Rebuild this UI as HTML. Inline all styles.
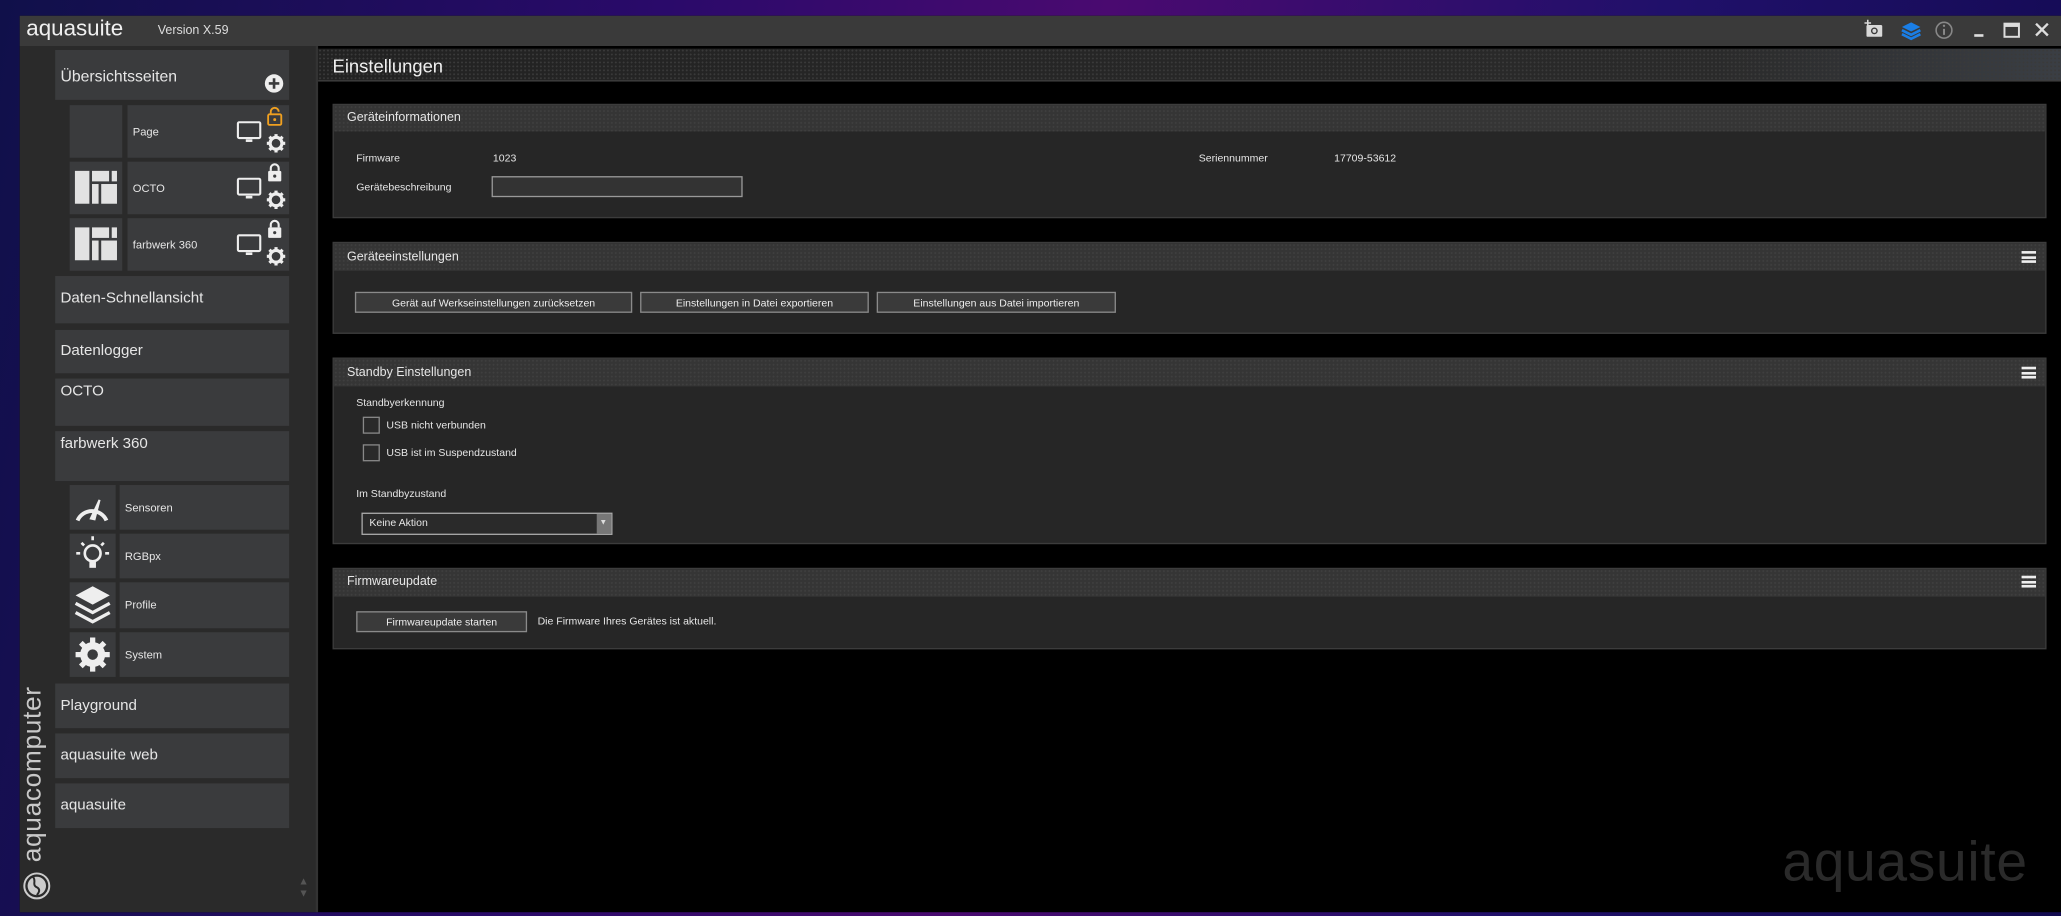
<!DOCTYPE html>
<html><head><meta charset="utf-8"><style>
html,body{margin:0;padding:0;width:2061px;height:916px;overflow:hidden;background:#1a0a4a;}
#s{position:absolute;left:0;top:0;width:1568px;height:697px;transform:scale(1.31441);transform-origin:0 0;font-family:"Liberation Sans",sans-serif;color:#e6e6e6;
background:linear-gradient(100deg,#10104a 0%,#2a0a6a 30%,#4a0a70 50%,#20106a 75%,#120a50 100%);}
.a{position:absolute;box-sizing:border-box;}
.it{background:#3a3b3d;}
.t{position:absolute;white-space:nowrap;}
.ph{background:#353535;background-image:radial-gradient(#3f3f3f 0.6px,transparent 0.8px);background-size:3px 3px;}
.pb{background:#262626;border:1px solid #3c3c3c;}
.btn{position:absolute;height:16px;border:1px solid #8a8a8a;background:#3a3a3a;font-size:8px;text-align:center;line-height:15px;box-sizing:border-box;color:#eee;}
.hm{position:absolute;width:11px;height:9px;border-top:2px solid #eee;border-bottom:2px solid #eee;box-sizing:border-box;}
.hm:after{content:"";position:absolute;left:0;right:0;top:1.5px;height:2px;background:#eee;}
.cb{position:absolute;width:13px;height:13px;border:1px solid #888;background:#2a2a2a;box-sizing:border-box;}
</style></head><body><div id="s">
<div class="a" style="left:15px;top:12px;width:1553px;height:682px;background:#000;"></div>
<div class="a" style="left:15px;top:12px;width:1553px;height:23px;background:#3a3a3a;"></div>
<div class="t" style="left:20px;top:12px;font-size:17px;color:#f0f0f0;">aquasuite</div>
<div class="t" style="left:120px;top:18px;font-size:9.5px;color:#ddd;">Version X.59</div>
<svg class="a" style="left:1418px;top:14px" width="150" height="18" viewBox="0 0 150 18">
<rect x="2" y="5" width="12" height="9" rx="1" fill="#d8d8d8"/><circle cx="8" cy="9.5" r="2.6" fill="#3a3a3a"/><circle cx="8" cy="9.5" r="1.5" fill="#d8d8d8"/><path d="M3 1v5M0.5 3.5h5" stroke="#d8d8d8" stroke-width="1.2"/>
<path d="M36 3l7 3.5-7 3.5-7-3.5z" fill="#1a7ee6"/><path d="M29 9l7 3.5 7-3.5M29 12l7 3.5 7-3.5" stroke="#1a7ee6" stroke-width="2" fill="none"/>
<circle cx="61" cy="9" r="6" stroke="#888" stroke-width="1.2" fill="none"/><path d="M61 8v4.5" stroke="#888" stroke-width="1.5"/><circle cx="61" cy="5.6" r="0.9" fill="#888"/>
<rect x="84" y="12" width="7" height="2" fill="#ddd"/>
<rect x="107" y="4" width="11" height="10" stroke="#ddd" stroke-width="1.5" fill="none"/><rect x="107" y="4" width="11" height="2.5" fill="#ddd"/>
<path d="M131 4l9 9M140 4l-9 9" stroke="#ddd" stroke-width="1.8"/>
</svg>
<div class="a" style="left:15px;top:35px;width:225px;height:659px;background:#2a2a2a;"></div>
<div class="a" style="left:240px;top:35px;width:2px;height:659px;background:#333;"></div>
<div class="t" style="left:14px;top:656px;font-size:20px;color:#c8c8c8;transform:rotate(-90deg);transform-origin:0 0;letter-spacing:0.5px;">aquacomputer</div>
<svg class="a" style="left:17px;top:663px" width="22" height="22" viewBox="0 0 22 22"><circle cx="11" cy="11" r="9.5" fill="none" stroke="#ccc" stroke-width="1.5"/><circle cx="11" cy="11" r="7" fill="#ccc"/><path d="M8 4c3 3-1 6 3 8s0 6 0 6" stroke="#2a2a2a" stroke-width="1.5" fill="none"/></svg>
<div class="t" style="left:227px;top:666px;font-size:8px;color:#555;line-height:9px;">▲<br>▼</div>

<div class="a it" style="left:42px;top:38px;width:178px;height:38px;"></div>
<div class="t" style="left:46px;top:51px;font-size:12px;">Übersichtsseiten</div>
<svg class="a" style="left:201px;top:56px" width="15" height="15" viewBox="0 0 15 15"><circle cx="7.5" cy="7.5" r="7" fill="#eee"/><path d="M7.5 3.5v8M3.5 7.5h8" stroke="#3a3b3d" stroke-width="2"/></svg>

<div class="a it" style="left:53px;top:80px;width:40px;height:40px;"></div>
<div class="a it" style="left:97px;top:80px;width:123px;height:40px;"></div>
<div class="t" style="left:101px;top:95px;font-size:8.5px;">Page</div>
<div class="a it" style="left:53px;top:123px;width:40px;height:40px;"></div>
<div class="a it" style="left:97px;top:123px;width:123px;height:40px;"></div>
<div class="t" style="left:101px;top:138px;font-size:8.5px;">OCTO</div>
<div class="a it" style="left:53px;top:166px;width:40px;height:40px;"></div>
<div class="a it" style="left:97px;top:166px;width:123px;height:40px;"></div>
<div class="t" style="left:101px;top:181px;font-size:8.5px;">farbwerk 360</div>
<svg class="a" style="left:53px;top:80px" width="167" height="126" viewBox="0 0 167 126">
<defs><g id="mon"><rect x="0" y="0" width="17" height="12" rx="1" fill="none" stroke="#eee" stroke-width="1.6"/><path d="M6 14h5" stroke="#eee" stroke-width="2"/></g>
<g id="gear"><circle cx="7" cy="7" r="4.5" fill="none" stroke="#eee" stroke-width="2.4"/><path d="M7 0v3M7 11v3M0 7h3M11 7h3M2 2l2 2M10 10l2 2M12 2l-2 2M4 10l-2 2" stroke="#eee" stroke-width="2.4"/></g>
<g id="lock"><rect x="0" y="5" width="10" height="8" rx="1" fill="#eee"/><path d="M2 5V3a3 3 0 0 1 6 0v2" stroke="#eee" stroke-width="1.6" fill="none"/><circle cx="5" cy="9" r="1.2" fill="#3a3b3d"/></g>
<g id="tiles"><rect x="0" y="0" width="11" height="25" fill="#e2e2e2"/><rect x="13" y="0" width="13" height="8" fill="#e2e2e2"/><rect x="13" y="10" width="5" height="15" fill="#e2e2e2"/><rect x="20" y="10" width="12" height="15" fill="#e2e2e2"/><rect x="28" y="0" width="4" height="8" fill="#e2e2e2"/></g></defs>
<use href="#mon" x="128" y="13"/><use href="#gear" x="150" y="22"/>
<g transform="translate(151,2)"><rect x="0" y="5" width="10" height="8" rx="1" fill="none" stroke="#f0a020" stroke-width="1.4"/><path d="M2 5V3a3 3 0 0 1 6 0" stroke="#f0a020" stroke-width="1.4" fill="none"/><circle cx="5" cy="9" r="1.1" fill="#f0a020"/></g>
<use href="#tiles" x="4" y="50"/><use href="#mon" x="128" y="56"/><use href="#gear" x="150" y="65"/><use href="#lock" x="151" y="45"/>
<use href="#tiles" x="4" y="93"/><use href="#mon" x="128" y="99"/><use href="#gear" x="150" y="108"/><use href="#lock" x="151" y="88"/>
</svg>

<div class="a it" style="left:42px;top:210px;width:178px;height:36px;"></div>
<div class="t" style="left:46px;top:221px;font-size:11.5px;">Daten-Schnellansicht</div>
<div class="a it" style="left:42px;top:251px;width:178px;height:33px;"></div>
<div class="t" style="left:46px;top:261px;font-size:11.5px;">Datenlogger</div>
<div class="a it" style="left:42px;top:288px;width:178px;height:36px;"></div>
<div class="t" style="left:46px;top:292px;font-size:11.5px;">OCTO</div>
<div class="a it" style="left:42px;top:328px;width:178px;height:38px;"></div>
<div class="t" style="left:46px;top:332px;font-size:11.5px;">farbwerk 360</div>

<div class="a it" style="left:53px;top:369px;width:35px;height:34px;"></div><div class="a it" style="left:91px;top:369px;width:129px;height:34px;"></div>
<div class="t" style="left:95px;top:381px;font-size:8.5px;">Sensoren</div>
<div class="a it" style="left:53px;top:406px;width:35px;height:34px;"></div><div class="a it" style="left:91px;top:406px;width:129px;height:34px;"></div>
<div class="t" style="left:95px;top:418px;font-size:8.5px;">RGBpx</div>
<div class="a it" style="left:53px;top:443px;width:35px;height:35px;"></div><div class="a it" style="left:91px;top:443px;width:129px;height:35px;"></div>
<div class="t" style="left:95px;top:455px;font-size:8.5px;">Profile</div>
<div class="a it" style="left:53px;top:481px;width:35px;height:34px;"></div><div class="a it" style="left:91px;top:481px;width:129px;height:34px;"></div>
<div class="t" style="left:95px;top:493px;font-size:8.5px;">System</div>
<svg class="a" style="left:53px;top:369px" width="35" height="146" viewBox="0 0 35 146">
<path d="M6 27a12 12 0 0 1 22 0" stroke="#eee" stroke-width="3" fill="none"/><path d="M15 26l7-15 1.5 0.5-4 15.5z" fill="#eee"/>
<g transform="translate(0,37)"><circle cx="17.5" cy="15" r="6" fill="none" stroke="#eee" stroke-width="2"/><rect x="15" y="21" width="5" height="5" fill="#eee"/><path d="M17.5 2v3M5 15h3M27 15h3M9 7l2 2M26 7l-2 2" stroke="#eee" stroke-width="2"/></g>
<g transform="translate(0,74)"><path d="M17.5 3l13 7-13 7-13-7z" fill="#eee"/><path d="M4.5 16l13 7 13-7M4.5 23l13 7 13-7" stroke="#eee" stroke-width="2.5" fill="none"/></g>
<g transform="translate(17.5,129)"><circle r="7" fill="none" stroke="#eee" stroke-width="5"/><path d="M0-13v26M-13 0h26M-9-9l18 18M9-9l-18 18" stroke="#eee" stroke-width="4"/><circle r="4" fill="#3a3b3d"/></g>
</svg>

<div class="a it" style="left:42px;top:520px;width:178px;height:34px;"></div>
<div class="t" style="left:46px;top:531px;font-size:11.5px;">Playground</div>
<div class="a it" style="left:42px;top:558px;width:178px;height:34px;"></div>
<div class="t" style="left:46px;top:569px;font-size:11.5px;">aquasuite web</div>
<div class="a it" style="left:42px;top:596px;width:178px;height:34px;"></div>
<div class="t" style="left:46px;top:607px;font-size:11.5px;">aquasuite</div>

<div class="a" style="left:242px;top:37px;width:1326px;height:25px;background-image:radial-gradient(#3a3a3a 0.6px,transparent 0.8px),linear-gradient(90deg,#222 0%,#2a2a2a 80%,#3a3e44 100%);background-size:3px 3px,100% 100%;border-bottom:1px solid #444;"></div>
<div class="t" style="left:253px;top:42px;font-size:14px;color:#f0f0f0;">Einstellungen</div>

<div class="a pb" style="left:253px;top:79px;width:1304px;height:87px;"></div>
<div class="a ph" style="left:254px;top:80px;width:1302px;height:20px;"></div>
<div class="t" style="left:264px;top:84px;font-size:9.5px;">Geräteinformationen</div>
<div class="t" style="left:271px;top:116px;font-size:8px;">Firmware</div>
<div class="t" style="left:375px;top:116px;font-size:8px;">1023</div>
<div class="t" style="left:912px;top:116px;font-size:8px;">Seriennummer</div>
<div class="t" style="left:1015px;top:116px;font-size:8px;">17709-53612</div>
<div class="t" style="left:271px;top:138px;font-size:8px;">Gerätebeschreibung</div>
<div class="a" style="left:374px;top:134px;width:191px;height:16px;border:1px solid #999;background:#333;"></div>

<div class="a pb" style="left:253px;top:184px;width:1304px;height:70px;"></div>
<div class="a ph" style="left:254px;top:185px;width:1302px;height:21px;"></div>
<div class="t" style="left:264px;top:190px;font-size:9.5px;">Geräteeinstellungen</div>
<div class="hm" style="left:1538px;top:191px;"></div>
<div class="btn" style="left:270px;top:222px;width:211px;">Gerät auf Werkseinstellungen zurücksetzen</div>
<div class="btn" style="left:487px;top:222px;width:174px;">Einstellungen in Datei exportieren</div>
<div class="btn" style="left:667px;top:222px;width:182px;">Einstellungen aus Datei importieren</div>

<div class="a pb" style="left:253px;top:272px;width:1304px;height:142px;"></div>
<div class="a ph" style="left:254px;top:273px;width:1302px;height:21px;"></div>
<div class="t" style="left:264px;top:278px;font-size:9.5px;">Standby Einstellungen</div>
<div class="hm" style="left:1538px;top:279px;"></div>
<div class="t" style="left:271px;top:302px;font-size:8px;">Standbyerkennung</div>
<div class="cb" style="left:276px;top:317px;"></div>
<div class="t" style="left:294px;top:319px;font-size:8px;">USB nicht verbunden</div>
<div class="cb" style="left:276px;top:338px;"></div>
<div class="t" style="left:294px;top:340px;font-size:8px;">USB ist im Suspendzustand</div>
<div class="t" style="left:271px;top:371px;font-size:8px;">Im Standbyzustand</div>
<div class="a" style="left:275px;top:390px;width:191px;height:17px;border:1px solid #aaa;background:#2a2a2a;"></div>
<div class="a" style="left:454px;top:391px;width:11px;height:15px;background:#777;"></div>
<div class="t" style="left:456px;top:395px;font-size:6px;color:#ddd;">▼</div>
<div class="t" style="left:281px;top:393px;font-size:8px;">Keine Aktion</div>

<div class="a pb" style="left:253px;top:432px;width:1304px;height:62px;"></div>
<div class="a ph" style="left:254px;top:433px;width:1302px;height:21px;"></div>
<div class="t" style="left:264px;top:437px;font-size:9.5px;">Firmwareupdate</div>
<div class="hm" style="left:1538px;top:438px;"></div>
<div class="btn" style="left:271px;top:465px;width:130px;">Firmwareupdate starten</div>
<div class="t" style="left:409px;top:468px;font-size:8px;">Die Firmware Ihres Gerätes ist aktuell.</div>

<div class="t" style="left:1356px;top:632px;font-size:42px;color:#2a2a2a;letter-spacing:0.5px;">aquasuite</div>
</div></body></html>
